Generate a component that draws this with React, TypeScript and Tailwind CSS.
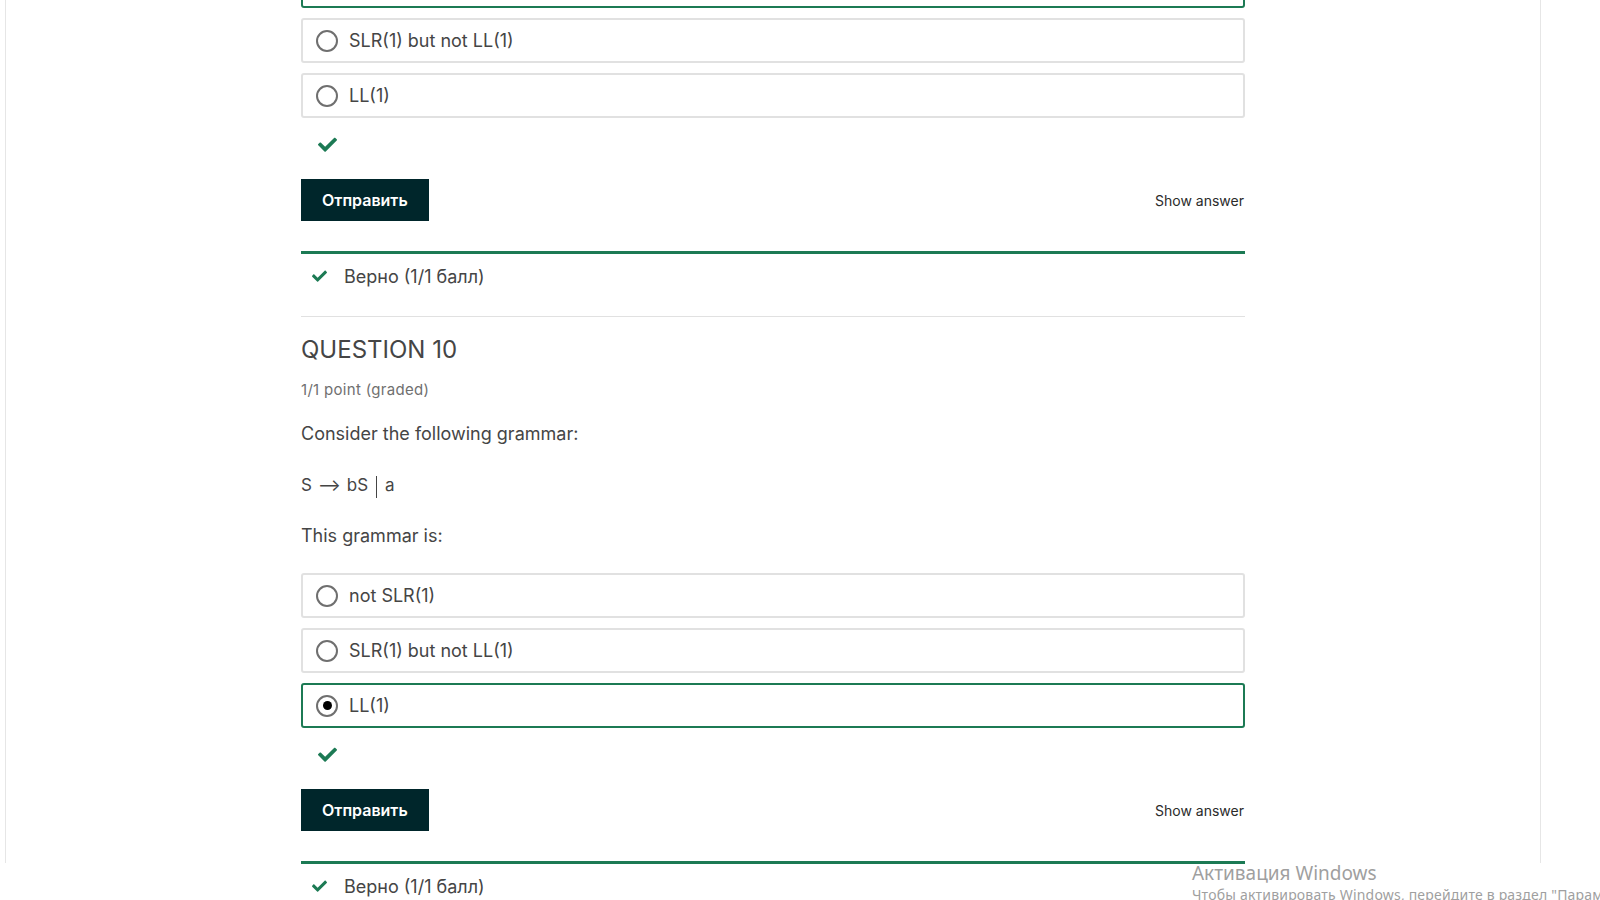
import React from "react";

const GREEN = "#1c7a54";

function Check({ size = "lg" }: { size?: "lg" | "sm" }) {
  const w = size === "lg" ? 19 : 15;
  const h = size === "lg" ? 15 : 12;
  return (
    <svg width={w} height={h} viewBox="0 0 512 400" fill={GREEN}>
      <path d="M173.9 389.8L7.5 223.4c-10-10-10-26.2 0-36.2l36.2-36.2c10-10 26.2-10 36.2 0L192 263.1 432.1 23c10-10 26.2-10 36.2 0l36.2 36.2c10 10 10 26.2 0 36.2L210.1 389.8c-10 10-26.2 10-36.2 0z" />
    </svg>
  );
}

function Option({ label, selected = false }: { label: string; selected?: boolean }) {
  return (
    <div
      className={`h-[45px] flex items-center rounded-[3px] border-2 ${
        selected ? "border-[#1c7a54]" : "border-[#e1e1e1]"
      }`}
    >
      <div className="ml-[13px] w-[22px] h-[22px] rounded-full border-2 border-[#6f6f6f] flex items-center justify-center">
        {selected && <div className="w-[9px] h-[9px] rounded-full bg-black" />}
      </div>
      <span className="ml-[11px] text-[18px] text-[#454545]">{label}</span>
    </div>
  );
}

function AnswerBlock({ selected }: { selected: number }) {
  const options = ["not SLR(1)", "SLR(1) but not LL(1)", "LL(1)"];
  return (
    <div>
      <div className="flex flex-col gap-[10px]">
        {options.map((o, i) => (
          <Option key={o} label={o} selected={i === selected} />
        ))}
      </div>
      <div className="h-[61px] pt-[19px] pl-[17px]">
        <Check />
      </div>
      <div className="flex items-center justify-between">
        <button className="h-[42px] px-[21px] bg-[#00262b] text-white text-[16px] font-semibold">
          Отправить
        </button>
        <span className="mr-[1px] text-[14px] text-[#2b2b2b]">Show answer</span>
      </div>
      <div className="mt-[30px] h-[3px] bg-[#1c7a54]" />
      <div className="h-[44px] flex items-center pl-[11px]">
        <Check size="sm" />
        <span className="ml-[17px] text-[18px] text-[#454545]">Верно (1/1 балл)</span>
      </div>
    </div>
  );
}

export default function App() {
  return (
    <div
      className="relative w-[1600px] h-[900px] overflow-hidden bg-white"
      style={{ fontFamily: "Inter, 'Noto Sans', sans-serif" }}
    >
      <div className="ml-[5px] w-[1536px] h-full border-x border-[#e6e6e6]">
        <div className="ml-[295px] w-[944px] -mt-[37px]">
          <AnswerBlock selected={0} />
          <div className="mt-[18px] border-t border-[#e1e1e1]" />

          <div className="mt-[18px] text-[24px] leading-[30px] text-[#454545]">QUESTION 10</div>
          <div className="mt-[15px] text-[15px] leading-[20px] tracking-[0.3px] text-[#707070]">
            1/1 point (graded)
          </div>
          <div className="mt-[22px] text-[18px] leading-[24px] text-[#454545]">
            Consider the following grammar:
          </div>
          <div className="mt-[27px] text-[17px] leading-[24px] text-[#454545] flex items-center">
            <span>S</span>
            <span className="mx-[6px]">⟶</span>
            <span>bS</span>
            <span className="mx-[8px] inline-block w-[1px] h-[22px] bg-[#454545] translate-y-[2px]" />
            <span>a</span>
          </div>
          <div className="mt-[27px] mb-[25px] text-[18px] leading-[24px] text-[#454545]">
            This grammar is:
          </div>

          <AnswerBlock selected={2} />
        </div>
      </div>

      <div
        className="absolute left-[1192px] top-[861px] text-[#9f9f9f] whitespace-nowrap"
        style={{ fontFamily: "'Noto Sans', sans-serif" }}
      >
        <div className="text-[19px] leading-[25px]">Активация Windows</div>
        <div className="text-[14px] leading-[18px] tracking-[0.2px]">
          Чтобы активировать Windows, перейдите в раздел "Параметры".
        </div>
      </div>
    </div>
  );
}
